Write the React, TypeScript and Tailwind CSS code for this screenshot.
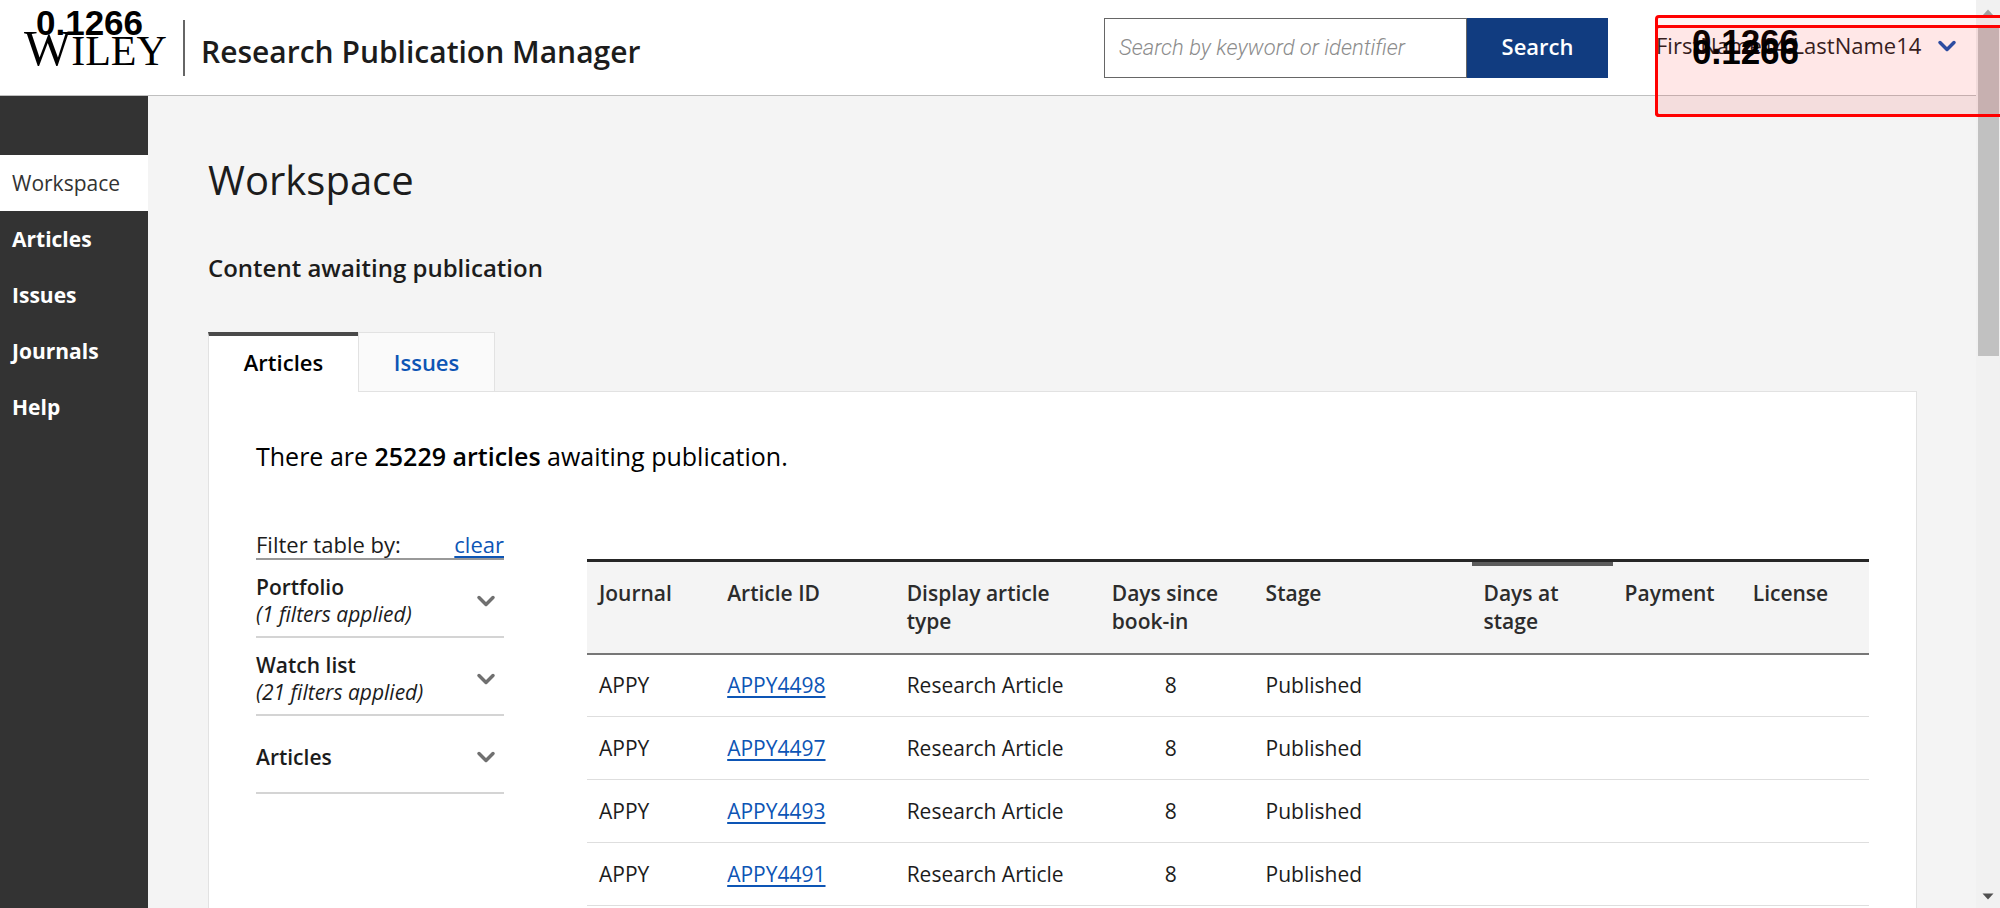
import { ChevronDown } from "lucide-react";

const nav = ["Workspace", "Articles", "Issues", "Journals", "Help"];

const filters = [
  { name: "Portfolio", note: "(1 filters applied)" },
  { name: "Watch list", note: "(21 filters applied)" },
  { name: "Articles", note: "" },
];

const columns = [
  { label: "Journal", width: "w-[10%]" },
  { label: "Article ID", width: "w-[14%]" },
  { label: "Display article type", width: "w-[16%]" },
  { label: "Days since book-in", width: "w-[12%]" },
  { label: "Stage", width: "w-[17%]" },
  { label: "Days at stage", width: "w-[11%]" },
  { label: "Payment", width: "w-[10%]" },
  { label: "License", width: "w-[10%]" },
];

const articles = ["APPY4498", "APPY4497", "APPY4493", "APPY4491"];

function Header() {
  return (
    <header className="flex h-24 items-center border-b border-[#bfbfbf] bg-white">
      <a href="#home" className="flex items-center pl-6">
        <span className="w-[159px] pt-1 font-['Liberation_Serif'] text-[42px] leading-10 text-black">
          <span className="text-[50px]">W</span>ILEY
        </span>
        <span className="mr-4 h-14 w-0.5 bg-[#666]" />
        <span className="pt-2 text-[30px] leading-10 font-semibold whitespace-nowrap">Research Publication Manager</span>
      </a>
      <form className="ml-auto flex h-[60px]" onSubmit={(e) => e.preventDefault()}>
        <input
          type="search"
          aria-label="Search by keyword or identifier"
          placeholder="Search by keyword or identifier"
          className="w-[363px] border border-[#666] bg-white px-3.5 font-[Roboto] text-[22px] font-light placeholder:text-[#8c8c8c] placeholder:italic"
        />
        <button type="submit" className="w-[141px] bg-[#113c80] pb-0.5 text-[22px] font-semibold text-white">
          Search
        </button>
      </form>
      <button type="button" className="ml-12 flex w-80 items-center gap-3 pb-1 text-[22px] whitespace-nowrap">
        FirstName14 LastName14
        <ChevronDown className="size-7 shrink-0 text-[#1350b0]" strokeWidth={3} />
      </button>
    </header>
  );
}

function Sidebar() {
  return (
    <nav className="w-[148px] shrink-0 bg-[#333] pt-[59px]">
      {nav.map((item, i) => (
        <a
          key={item}
          href={"#" + item.toLowerCase()}
          className={
            "flex h-14 items-center pt-0.5 pl-3 text-[21px] " +
            (i === 0 ? "bg-white text-[#333]" : "font-bold text-white")
          }
        >
          {item}
        </a>
      ))}
    </nav>
  );
}

function Filters() {
  return (
    <aside className="w-[248px] shrink-0">
      <div className="flex justify-between border-b-2 border-[#999] text-[22px] leading-7">
        <span>Filter table by:</span>
        <a href="#clear" className="text-[#0d55b5] underline decoration-2 underline-offset-3">clear</a>
      </div>
      {filters.map((f) => (
        <button
          key={f.name}
          type="button"
          className="flex h-[78px] w-full items-center justify-between border-b-2 border-[#d4d4d4] pt-1.5 pr-1 text-left text-[21px] leading-[27px]"
        >
          <span>
            <span className="block font-semibold">{f.name}</span>
            {f.note && <span className="block italic">{f.note}</span>}
          </span>
          <ChevronDown className="size-7 text-[#707070]" strokeWidth={3} />
        </button>
      ))}
    </aside>
  );
}

function ArticleTable() {
  return (
    <table className="mt-[29px] min-w-0 flex-1 table-fixed border-collapse text-left text-[21px] leading-7">
      <thead>
        <tr className="h-[93px] border-t-3 border-b-2 border-t-[#262626] border-b-[#777] bg-[#f4f4f4] align-top">
          {columns.map((c) => (
            <th key={c.label} scope="col" className={"relative px-3 pt-[17px] font-semibold text-[#2c2c2c] " + c.width}>
              {c.label === "Days at stage" && <span className="absolute inset-x-0 top-0 h-1 bg-[#5c5c5c]" />}
              {c.label}
            </th>
          ))}
        </tr>
      </thead>
      <tbody>
        {articles.map((id) => (
          <tr key={id} className="h-[63px] border-b border-[#dedede]">
            <td className="px-3">APPY</td>
            <td className="px-3">
              <a href={"#" + id} className="text-[#0d55b5] underline decoration-2 underline-offset-3">{id}</a>
            </td>
            <td className="px-3 whitespace-nowrap">Research Article</td>
            <td className="pr-6 pl-3 text-center">8</td>
            <td className="px-3">Published</td>
            <td />
            <td />
            <td />
          </tr>
        ))}
      </tbody>
    </table>
  );
}

function Scrollbar() {
  return (
    <div className="flex w-6 shrink-0 flex-col items-center bg-[#f1f1f1]" aria-hidden="true">
      <svg viewBox="0 0 24 26" className="h-[26px] w-6">
        <path d="M12 9.5 17.500 15.500H6.500Z" fill="#a0a0a0" />
      </svg>
      <div className="h-[330px] w-[21px] bg-[#c1c1c1]" />
      <svg viewBox="0 0 24 26" className="mt-auto h-[26px] w-6">
        <path d="M12 17.500 17.500 11.500H6.500Z" fill="#505050" />
      </svg>
    </div>
  );
}

export default function App() {
  return (
    <div className="relative flex h-screen overflow-hidden bg-[#f4f4f4] font-['Open_Sans',sans-serif] text-[#1c1c1c]">
      <div className="flex min-w-0 flex-1 flex-col">
        <Header />
        <div className="flex min-h-0 flex-1">
          <Sidebar />
          <main className="min-w-0 flex-1 pt-14 pr-[59px] pl-[60px]">
            <h1 className="text-[40px] leading-[56px]">Workspace</h1>
            <h2 className="mt-11 text-[24px] leading-8 font-semibold">Content awaiting publication</h2>
            <div role="tablist" className="mt-12 flex text-[22px] font-semibold">
              <button role="tab" aria-selected="true" className="z-10 -mb-px h-[60px] w-[150px] border-t-4 border-l border-t-[#4a4a4a] border-l-[#e2e2e2] bg-white pb-1 text-black">
                Articles
              </button>
              <button role="tab" aria-selected="false" className="h-[59px] w-[137px] border border-b-0 border-[#e2e2e2] bg-[#fafafa] text-[#0d55b5]">
                Issues
              </button>
            </div>
            <section className="border border-[#e2e2e2] bg-white px-[47px] pt-12 pb-12">
              <p className="text-[25px] leading-8 text-black">
                There are <strong className="font-semibold">25229 articles</strong> awaiting publication.
              </p>
              <div className="mt-[58px] flex items-start gap-[83px]">
                <Filters />
                <ArticleTable />
              </div>
            </section>
          </main>
        </div>
      </div>
      <Scrollbar />
      <div className="absolute top-[7px] left-9 z-20 font-['Liberation_Sans'] text-[35px] leading-8 font-bold text-black">0.1266</div>
      <div className="pointer-events-none absolute top-[15px] -right-1 z-20 h-[102px] w-[349px] rounded-sm border-3 border-[#ff0000] bg-red-500/6 pl-[34px] font-['Liberation_Sans'] text-[35px] leading-8 font-bold text-black">
        <div className="pt-2">0.1266</div>
      </div>
      <div className="pointer-events-none absolute top-[25px] -right-1 z-20 h-[92px] w-[349px] rounded-sm border-3 border-[#ff0000] bg-red-500/6 pl-[34px] font-['Liberation_Sans'] text-[35px] leading-8 font-bold text-black">
        <div className="pt-2">0.1266</div>
      </div>
    </div>
  );
}
